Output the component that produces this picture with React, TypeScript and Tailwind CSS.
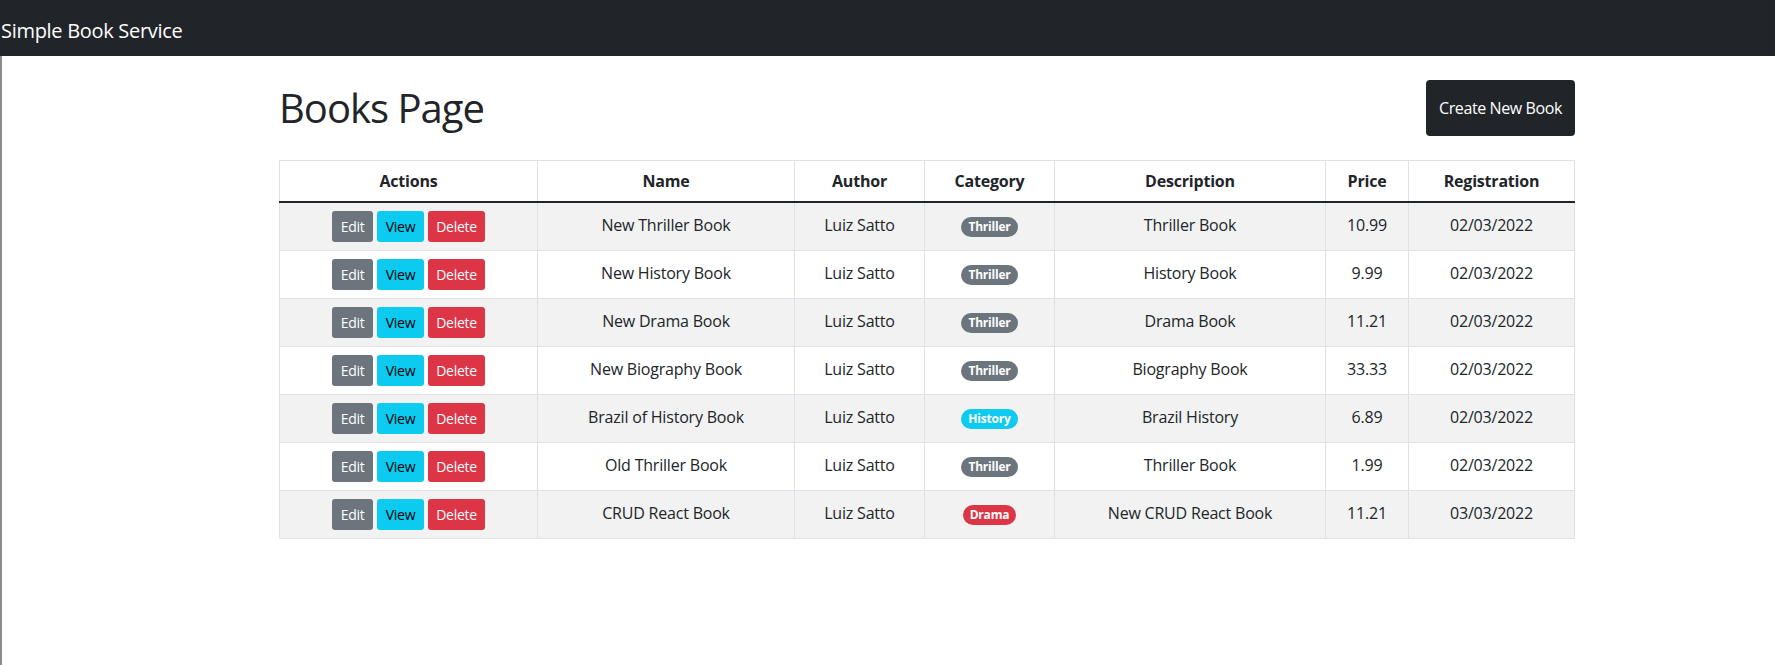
import React from "react";

type Book = {
  name: string;
  author: string;
  category: "Thriller" | "History" | "Drama";
  description: string;
  price: string;
  registration: string;
};

const books: Book[] = [
  { name: "New Thriller Book", author: "Luiz Satto", category: "Thriller", description: "Thriller Book", price: "10.99", registration: "02/03/2022" },
  { name: "New History Book", author: "Luiz Satto", category: "Thriller", description: "History Book", price: "9.99", registration: "02/03/2022" },
  { name: "New Drama Book", author: "Luiz Satto", category: "Thriller", description: "Drama Book", price: "11.21", registration: "02/03/2022" },
  { name: "New Biography Book", author: "Luiz Satto", category: "Thriller", description: "Biography Book", price: "33.33", registration: "02/03/2022" },
  { name: "Brazil of History Book", author: "Luiz Satto", category: "History", description: "Brazil History", price: "6.89", registration: "02/03/2022" },
  { name: "Old Thriller Book", author: "Luiz Satto", category: "Thriller", description: "Thriller Book", price: "1.99", registration: "02/03/2022" },
  { name: "CRUD React Book", author: "Luiz Satto", category: "Drama", description: "New CRUD React Book", price: "11.21", registration: "03/03/2022" },
];

const badgeColors: Record<Book["category"], string> = {
  Thriller: "bg-[#6c757d]",
  History: "bg-[#0dcaf0]",
  Drama: "bg-[#dc3545]",
};

const th = "border border-[#dee2e6] border-b-2 border-b-[#212529] px-2 py-2 font-bold tracking-[-0.2px]";
// text cells sit a little higher than the buttons
const td = "border border-[#dee2e6] px-2 pt-[6px] pb-[10px] align-middle tracking-[-0.2px]";

const App = () => {
  return (
    <div className="min-h-screen bg-white text-[#212529] font-['Open_Sans',sans-serif]">
      {/* Navbar */}
      <nav className="h-14 bg-[#212529] flex items-center pt-[5px]">
        <span className="pl-[1px] text-[20px] leading-[30px] text-white tracking-[-0.3px]">Simple Book Service</span>
      </nav>

      <div className="min-h-[609px] border-l-2 border-[#8c8c8c]">
        <main className="ml-[277px] w-[1296px]">
          {/* Header */}
          <div className="flex items-center justify-between pt-6 pb-6">
            <h1 className="text-[40px] leading-[48px] font-normal tracking-[-1px]">Books Page</h1>
            <button className="h-14 w-[149px] rounded-[4px] bg-[#212529] text-white text-[16px] leading-6 tracking-[-0.4px]">
              Create New Book
            </button>
          </div>

          {/* Books table */}
          <table className="w-[1295px] table-fixed border-collapse border border-[#dee2e6] text-center text-[16px] leading-6">
            <colgroup>
              <col className="w-[258px]" />
              <col className="w-[257px]" />
              <col className="w-[130px]" />
              <col className="w-[130px]" />
              <col className="w-[271px]" />
              <col className="w-[83px]" />
              <col className="w-[166px]" />
            </colgroup>
            <thead>
              <tr>
                <th className={th}>Actions</th>
                <th className={th}>Name</th>
                <th className={th}>Author</th>
                <th className={th}>Category</th>
                <th className={th}>Description</th>
                <th className={th}>Price</th>
                <th className={th}>Registration</th>
              </tr>
            </thead>
            <tbody>
              {books.map((book, i) => (
                <tr key={i} className={i % 2 === 0 ? "bg-[#f2f2f2]" : "bg-white"}>
                  <td className="border border-[#dee2e6] px-2 py-2 align-middle">
                    <div className="flex justify-center gap-1">
                      <button className="h-[31px] w-[41px] rounded-[3px] bg-[#6c757d] text-white text-[14px] leading-[21px] tracking-[-0.3px]">Edit</button>
                      <button className="h-[31px] w-[47px] rounded-[3px] bg-[#0dcaf0] text-black text-[14px] leading-[21px] tracking-[-0.3px]">View</button>
                      <button className="h-[31px] w-[57px] rounded-[3px] bg-[#dc3545] text-white text-[14px] leading-[21px] tracking-[-0.3px]">Delete</button>
                    </div>
                  </td>
                  <td className={td}>{book.name}</td>
                  <td className={td}>{book.author}</td>
                  <td className={td}>
                    <span className={`inline-block rounded-full px-[7px] py-[4px] text-[12px] leading-[12px] font-bold text-white ${badgeColors[book.category]}`}>
                      {book.category}
                    </span>
                  </td>
                  <td className={td}>{book.description}</td>
                  <td className={td}>{book.price}</td>
                  <td className={td}>{book.registration}</td>
                </tr>
              ))}
            </tbody>
          </table>
        </main>
      </div>
    </div>
  );
};

export default App;
